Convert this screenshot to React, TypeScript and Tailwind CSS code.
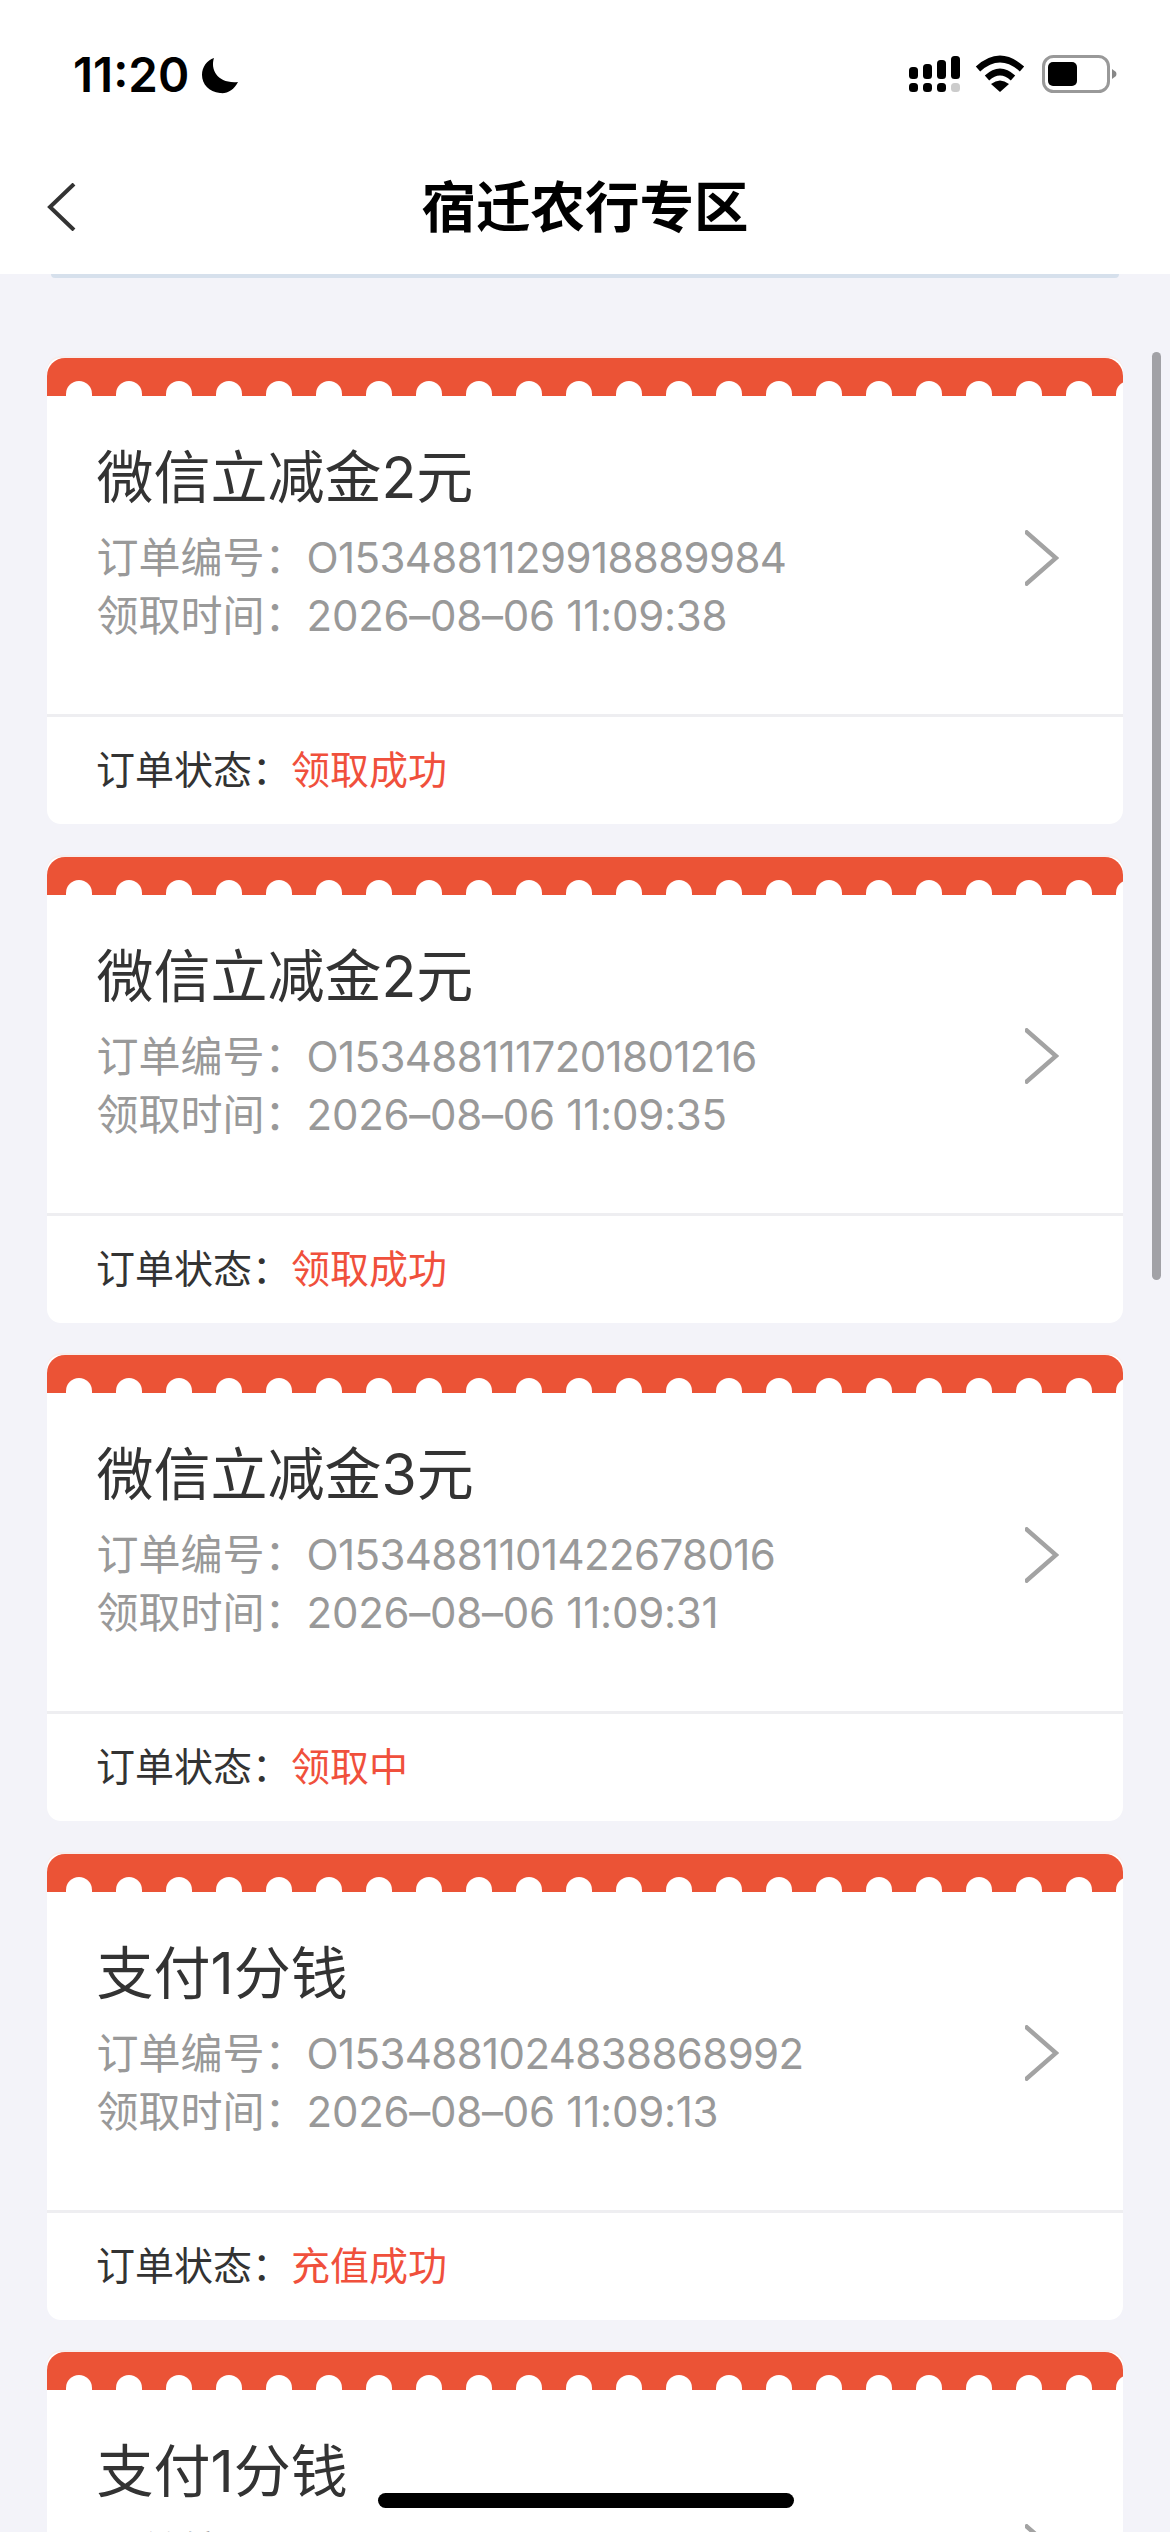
const orders = [
  { title: "微信立减金2元", no: "O1534881129918889984", time: "2026–08–06 11:09:38", status: "领取成功" },
  { title: "微信立减金2元", no: "O1534881117201801216", time: "2026–08–06 11:09:35", status: "领取成功" },
  { title: "微信立减金3元", no: "O1534881101422678016", time: "2026–08–06 11:09:31", status: "领取中" },
  { title: "支付1分钱", no: "O1534881024838868992", time: "2026–08–06 11:09:13", status: "充值成功" },
  { title: "支付1分钱", no: "O1534881010000000000", time: "2026–08–06 11:09:02", status: "充值成功" },
];

const scallops = Array.from({ length: 22 }, (_, i) => i);

function StatusIcons() {
  return (
    <div className="flex items-center">
      <svg width="54" height="38" viewBox="0 0 54 38" fill="#000" className="mr-[12px]">
        <rect x="0" y="12" width="9" height="12" rx="3.5" />
        <rect x="14" y="9" width="9" height="15" rx="3.5" />
        <rect x="28" y="5" width="9" height="19" rx="3.5" />
        <rect x="42" y="1" width="9" height="23" rx="3.5" />
        <rect x="0" y="28" width="9" height="9" rx="3.5" />
        <rect x="14" y="28" width="9" height="9" rx="3.5" />
        <rect x="28" y="28" width="9" height="9" rx="3.5" />
        <rect x="42" y="28" width="9" height="9" rx="3.5" fill="#cccccc" />
      </svg>
      <svg width="50" height="38" viewBox="0 0 50 38" className="mr-[17px]">
        <path d="M3 14 Q25 -6 47 14" fill="none" stroke="#000" strokeWidth="6.5" />
        <path d="M12 23 Q25 11 38 23" fill="none" stroke="#000" strokeWidth="6.5" />
        <path d="M25 37 L16 29 Q25 22 34 29 Z" fill="#000" />
      </svg>
      <svg width="76" height="38" viewBox="0 0 76 38">
        <rect x="1.5" y="1.5" width="65" height="35" rx="10" fill="none" stroke="#999999" strokeWidth="3" />
        <rect x="6" y="7" width="29" height="24" rx="5" fill="#000" />
        <path d="M70 14 L74 17 Q75 19 74 21 L70 24 Z" fill="#888888" />
      </svg>
    </div>
  );
}

function OrderCard({ order }: { order: (typeof orders)[number] }) {
  return (
    <section className="h-[466px] shrink-0 overflow-hidden rounded-[14px] bg-white shadow-[0_-2px_0_#f6eeee]">
      <div className="flex h-[38px] items-end overflow-hidden rounded-t-[18px] bg-[#eb5336] pl-[19px]">
        <div className="flex gap-[24px]">
          {scallops.map((i) => (
            <span key={i} className="h-[15px] w-[26px] shrink-0 rounded-t-full bg-white" />
          ))}
        </div>
      </div>
      <div className="h-[318px] pt-[50px] pl-[49.5px] pr-[64px]">
        <h2 className="text-[57px] leading-[64px] font-normal text-[#333333]">{order.title}</h2>
        <div className="mt-[19px] flex h-[57px] items-center justify-between text-[42px] leading-[57px] text-[#999999]">
          <p className="whitespace-pre">
            订单编号：<span className="tracking-[-0.6px]">{order.no}</span>
          </p>
          <svg width="34" height="56" viewBox="0 0 34 56" fill="none" stroke="#a3a3a3" strokeWidth="4.5">
            <path d="M0 1 L31 28 L0 55" />
          </svg>
        </div>
        <p className="h-[59px] whitespace-pre text-[42px] leading-[59px] text-[#999999]">
          领取时间：<span className="tracking-[-0.25px]">{order.time}</span>
        </p>
      </div>
      <div className="flex h-[110px] items-center border-t-[3px] border-[#eeeef1] pl-[49px] text-[39px] text-[#333333]">
        <span>订单状态：</span>
        <span className="text-[#f0503c]">{order.status}</span>
      </div>
    </section>
  );
}

export default function App() {
  return (
    <div className="relative h-[2532px] w-[1170px] overflow-hidden bg-[#f3f3f9] font-['Inter','Noto_Sans_CJK_SC',sans-serif]">
      <header className="h-[274px] bg-white">
        <div className="flex h-[150px] items-start justify-between pt-[55px] pl-[73px] pr-[52px]">
          <div className="flex items-center">
            <span className="text-[47.5px] leading-[40px] font-semibold text-black">11:20</span>
            <svg width="37" height="37" viewBox="0 0 37 37" className="ml-[13px]">
              <path d="M12 1 C8 13 16 27 36 25 C32 33 25 37 18 36 C7 35 0 27 0 18 C0 10 5 3 12 1 Z" fill="#000" />
            </svg>
          </div>
          <StatusIcons />
        </div>
        <div className="relative flex h-[124px] items-start justify-center">
          <svg width="30" height="48" viewBox="0 0 30 48" fill="none" stroke="#333333" strokeWidth="4" className="absolute top-[33px] left-[47px]">
            <path d="M27 1 L3 24 L27 47" />
          </svg>
          <h1 className="mt-[24px] text-[54.5px] leading-[66px] font-bold text-black">宿迁农行专区</h1>
        </div>
      </header>
      <div className="mx-[51px] h-[4px] rounded-b-[6px] bg-[#d6e0ec]" />
      <main className="flex flex-col gap-[32.5px] px-[47px] pt-[80px]">
        {orders.map((order, i) => (
          <OrderCard key={i} order={order} />
        ))}
      </main>
      <div className="absolute top-[352px] left-[1152px] h-[928px] w-[9px] rounded-full bg-[#a1a1a6]" />
      <div className="absolute top-[2493px] left-[378px] h-[15px] w-[416px] rounded-full bg-black" />
    </div>
  );
}
